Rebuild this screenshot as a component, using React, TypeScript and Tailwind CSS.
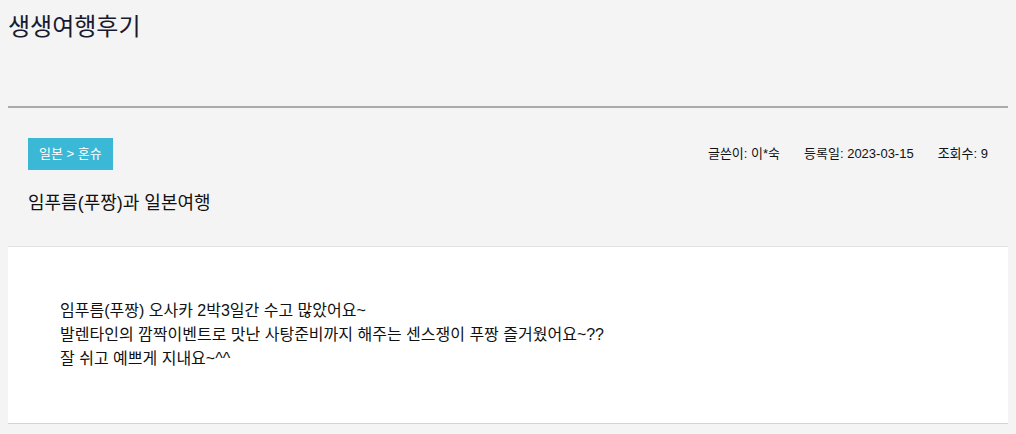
const font = { fontFamily: '"Liberation Sans", "Noto Sans CJK KR", sans-serif' };

export default function App() {
  return (
    <div className="min-h-[434px] bg-[#f4f4f4] px-2 text-[#111]" style={font}>
      {/* page heading */}
      <div className="h-[108px] border-b-2 border-[#aaaaaa] pt-[11px]">
        <h1 className="text-[24px] leading-[32px] text-[#1a1a2e]">생생여행후기</h1>
      </div>

      {/* post header */}
      <div className="px-5 pt-[30px]">
        <div className="flex items-center justify-between">
          <span className="flex h-8 items-center bg-[#3ab8d6] px-[11px] text-[13px] text-white">
            일본 &gt; 혼슈
          </span>
          <div className="flex gap-[24px] text-[13px] text-[#111]">
            <span>글쓴이: 이*숙</span>
            <span>등록일: 2023-03-15</span>
            <span>조회수: 9</span>
          </div>
        </div>
        <h2 className="pb-[30px] pt-[20px] text-[18px] leading-[26px]">
          임푸름(푸짱)과 일본여행
        </h2>
      </div>

      {/* post body */}
      <div className="h-[178px] border-y border-t-[#e2e2e2] border-b-[#d4d4d4] bg-white pl-[52px] pt-[52px] text-[16px] leading-[24px]">
        <p>임푸름(푸짱) 오사카 2박3일간 수고 많았어요~</p>
        <p>발렌타인의 깜짝이벤트로 맛난 사탕준비까지 해주는 센스쟁이 푸짱 즐거웠어요~??</p>
        <p>잘 쉬고 예쁘게 지내요~^^</p>
      </div>
    </div>
  );
}
